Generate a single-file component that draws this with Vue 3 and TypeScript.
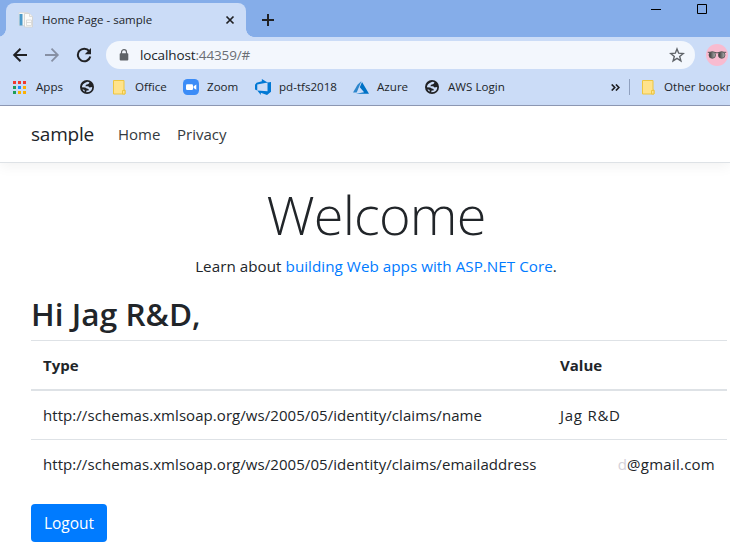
<script setup lang="ts">
interface Claim {
  type: string
  hidden: string
  value: string
}

const claims: Claim[] = [
  { type: 'http://schemas.xmlsoap.org/ws/2005/05/identity/claims/name', hidden: '', value: 'Jag R&D' },
  { type: 'http://schemas.xmlsoap.org/ws/2005/05/identity/claims/emailaddress', hidden: 'd', value: '@gmail.com' },
]

const appDots: string[] = [
  '#f03a2e', '#f03a2e', '#f03a2e',
  '#1f9d58', '#1a8cff', '#fbb004',
  '#1f9d58', '#fbb004', '#fbb004',
]

const globePath =
  'M6.200 2.200Q7.800 1.500 9.400 2.300Q9.400 4 7.800 4.300L6 4.800 5.400 6.300H8.200L9.500 7.500 12.200 7Q12.300 10.800 8.800 12.100L6.200 12.300 6.600 10.500H8.600V9L6.800 8.600 5.200 7.600 1.900 7.300Q2 3.800 6.200 2.200zM2.500 9.200L4.600 9.900V11.700Q3.100 10.900 2.500 9.200z'
</script>

<template>
  <div class="window">
    <header class="chrome">
      <div class="tabstrip">
        <div class="tab">
          <svg class="favicon" width="16" height="16" viewBox="0 0 16 16">
            <path d="M1 .5h9v13H1z" fill="#f6f6f4" stroke="#d5d8dc" stroke-width=".8" />
            <path d="M1.500 2h3v11.500h-3z" fill="#4a9acb" />
            <path d="M6.500 1.500h5l3 3V15h-8z" fill="#fbfbfa" stroke="#d3d3d0" stroke-width=".9" />
            <path d="M8.500 8h5v5.500h-5zM8.500 10.500h5" fill="none" stroke="#d6d6d3" stroke-width=".8" />
            <path d="M11.500 1.500v3h3" fill="#f4f4f4" stroke="#d3d3d0" stroke-width=".8" />
          </svg>
          <span class="tab-title">Home Page - sample</span>
          <svg class="close" width="10" height="10" viewBox="0 0 10 10">
            <path d="M1.500 1.500l7 7M8.500 1.500l-7 7" stroke="#202124" stroke-width="1.7" />
          </svg>
        </div>
        <svg class="plus" width="12" height="12" viewBox="0 0 12 12">
          <path d="M6 0v12M0 6h12" stroke="#202124" stroke-width="2" />
        </svg>
        <svg class="minimize" width="10" height="10" viewBox="0 0 10 10">
          <path d="M0 5.500h10" stroke="#000" />
        </svg>
        <svg class="maximize" width="10" height="10" viewBox="0 0 10 10">
          <path d="M.5.5h9v9h-9z" fill="none" stroke="#000" />
        </svg>
      </div>

      <div class="toolbar">
        <svg class="nav-icon" width="16" height="16" viewBox="0 0 16 16">
          <path d="M15 8H2.500M8.500 1.700L2.200 8l6.300 6.300" fill="none" stroke="#202124" stroke-width="2" />
        </svg>
        <svg class="nav-icon" width="16" height="16" viewBox="0 0 16 16">
          <path d="M1 8h12.500M7.500 1.700L13.800 8l-6.300 6.300" fill="none" stroke="#8790a4" stroke-width="1.800" />
        </svg>
        <svg class="nav-icon" width="16" height="16" viewBox="0 0 16 16">
          <path d="M13.200 4.200A6.300 6.300 0 1 0 14.300 9.500" fill="none" stroke="#202124" stroke-width="2" />
          <path d="M15 1v6.200H8.800z" fill="#202124" />
        </svg>
        <div class="omnibox">
          <svg width="10" height="12" viewBox="0 0 10 12">
            <path d="M2.500 5V3.200a2.500 2.500 0 0 1 5 0V5" fill="none" stroke="#5f6368" stroke-width="1.200" />
            <rect x=".7" y="4.200" width="8.600" height="7.300" rx=".9" fill="#5f6368" />
          </svg>
          <span class="url">localhost<span class="url-rest">:44359/#</span></span>
          <svg class="star" width="16" height="16" viewBox="0 0 16 16">
            <path d="M8 1.900l1.700 4.300 4.500.3-3.500 2.900 1.200 4.500L8 11.400l-3.900 2.500 1.200-4.500-3.500-2.900 4.500-.3z" fill="none" stroke="#5f6368" stroke-width="1.400" />
          </svg>
        </div>
        <svg class="avatar" width="22" height="22" viewBox="0 0 22 22">
          <defs>
            <linearGradient id="lens" x1="0" x2="1">
              <stop offset="0" stop-color="#333" />
              <stop offset="1" stop-color="#b5b5b5" />
            </linearGradient>
          </defs>
          <circle cx="11" cy="11" r="11" fill="#f8bbd0" />
          <path d="M1.800 8.300h6.500q2.700 1.200 5.400 0h6.500" fill="none" stroke="#555" stroke-width="1" />
          <circle cx="6.300" cy="11" r="3.300" fill="url(#lens)" stroke="#555" stroke-width=".8" />
          <circle cx="15.700" cy="11" r="3.300" fill="url(#lens)" stroke="#555" stroke-width=".8" />
        </svg>
      </div>

      <nav class="bookmarks">
        <span class="apps"><i v-for="(c, i) in appDots" :key="i" :style="{ background: c }"></i></span>
        <span class="bm-text apps-text">Apps</span>
        <svg class="globe" width="14" height="14" viewBox="0 0 14 14">
          <circle cx="7" cy="7" r="7" fill="#202124" />
          <path :d="globePath" fill="#cbdcf7" />
        </svg>
        <svg class="folder f1" width="13" height="15" viewBox="0 0 13 15">
          <path d="M.5.500h10.500v9.500h1v4H.5z" fill="#ffe38c" stroke="#edc541" />
          <path d="M9.500 14v-3.500h2.500V14z" fill="#ffe38c" stroke="#edc541" />
        </svg>
        <span class="bm-text office-text">Office</span>
        <svg class="zoom" width="16" height="16" viewBox="0 0 16 16">
          <rect width="16" height="16" rx="4.500" fill="#3b8cf7" />
          <rect x="3" y="5.200" width="7" height="5.800" rx="1.200" fill="#fff" />
          <path d="M10.600 7.300l2.700-1.900v5.400l-2.700-1.900z" fill="#fff" />
        </svg>
        <span class="bm-text zoom-text">Zoom</span>
        <svg class="devops" width="16" height="16" viewBox="1 1 14 14">
          <path d="M15 3.622v8.512L11.500 15l-5.425-1.975v1.958L3.004 10.970l8.951.7V4.005L15 3.622zm-2.984.428L6.994 1v2.001L2.382 4.356 1 6.130v4.029l1.978.873V5.869l9.038-1.818z" fill="#0078d4" />
        </svg>
        <span class="bm-text tfs-text">pd-tfs2018</span>
        <svg class="azure" width="16" height="13" viewBox="0 0 16 13">
          <path d="M8.500 0L4.500 3.700 0 11.500h3.700z" fill="#2d86cc" />
          <path d="M9 1L6.800 6.300l4.300 5L3 12.700h13z" fill="#0072c6" />
        </svg>
        <span class="bm-text azure-text">Azure</span>
        <svg class="globe g2" width="14" height="14" viewBox="0 0 14 14">
          <circle cx="7" cy="7" r="7" fill="#202124" />
          <path :d="globePath" fill="#cbdcf7" />
        </svg>
        <span class="bm-text aws-text">AWS Login</span>
        <svg class="more" width="9" height="7" viewBox="0 0 9 7">
          <path d="M.7.500l3 3-3 3M4.900.500l3 3-3 3" fill="none" stroke="#202124" stroke-width="1.700" />
        </svg>
        <span class="divider"></span>
        <svg class="folder f2" width="13" height="15" viewBox="0 0 13 15">
          <path d="M.5.500h10.500v9.500h1v4H.5z" fill="#ffe38c" stroke="#edc541" />
          <path d="M9.500 14v-3.500h2.500V14z" fill="#ffe38c" stroke="#edc541" />
        </svg>
        <span class="bm-text other-text">Other bookmarks</span>
      </nav>
    </header>

    <nav class="navbar">
      <a class="brand">sample</a>
      <a class="link home">Home</a>
      <a class="link privacy">Privacy</a>
    </nav>

    <main class="content">
      <div class="intro">
        <h1 class="welcome">Welcome</h1>
        <p class="learn">Learn about <a>building Web apps with ASP.NET Core</a>.</p>
      </div>
      <h2 class="greeting">Hi Jag R&amp;D,</h2>
      <table class="claims">
        <thead>
          <tr><th>Type</th><th>Value</th></tr>
        </thead>
        <tbody>
          <tr v-for="claim in claims" :key="claim.type">
            <td>{{ claim.type }}</td>
            <td class="value" :class="{ masked: claim.hidden }"><span class="faint">{{ claim.hidden }}</span>{{ claim.value }}</td>
          </tr>
        </tbody>
      </table>
      <button class="logout" type="button">Logout</button>
    </main>
  </div>
</template>

<style>
body {
  margin: 0;
  overflow: hidden;
}
</style>

<style scoped>
.window {
  width: 730px;
  height: 551px;
  overflow: hidden;
  background: #fff;
  color: #212529;
  font-family: "Open Sans", "Noto Sans", sans-serif;
}
svg { display: block; flex: none; }
.chrome {
  height: 105px;
  background: #cbdcf7;
  border-bottom: 1px solid #8e99b5;
}
.tabstrip {
  display: flex;
  height: 37px;
  background: #85ade9;
}
.tab {
  position: relative;
  display: flex;
  align-items: center;
  box-sizing: border-box;
  width: 240px;
  height: 34px;
  margin: 3px 0 0 6px;
  padding: 0 11px 0 12px;
  border-radius: 8px 8px 0 0;
  background: #cbdcf7;
}
.tab::before,
.tab::after {
  content: "";
  position: absolute;
  bottom: 0;
  width: 8px;
  height: 8px;
}
.tab::before {
  left: -8px;
  background: radial-gradient(circle at 0 0, transparent 7.500px, #cbdcf7 8px);
}
.tab::after {
  right: -8px;
  background: radial-gradient(circle at 100% 0, transparent 7.500px, #cbdcf7 8px);
}
.tab-title {
  margin: -1px 0 0 8px;
  font-size: 11.500px;
  white-space: nowrap;
}
.close { margin-left: auto; }
.plus { margin: 14px 0 0 16px; }
.minimize { margin: 4px 0 0 auto; }
.maximize { margin: 4px 23px 0 36px; }
.toolbar {
  display: flex;
  align-items: center;
  height: 36px;
  padding-left: 12px;
}
.nav-icon { margin-right: 16px; }
.omnibox {
  display: flex;
  align-items: center;
  box-sizing: border-box;
  width: 589px;
  height: 28px;
  margin-left: -2px;
  padding: 0 10px 0 13px;
  border-radius: 14px;
  background: #f3f7fd;
}
.url {
  margin-left: 11px;
  font-size: 13.500px;
  letter-spacing: -.13px;
  white-space: nowrap;
}
.url-rest { color: #6b6e74; }
.star { margin-left: auto; }
.avatar { margin-left: 11px; }
.bookmarks {
  display: flex;
  align-items: center;
  height: 28px;
  padding-left: 13px;
}
.bm-text {
  margin-top: -2px;
  font-size: 11.600px;
  white-space: nowrap;
  flex: none;
}
.apps {
  display: grid;
  grid-template-columns: repeat(3, 3px);
  gap: 2px;
  width: 13px;
}
.apps i { height: 3px; }
.apps-text { width: 34px; margin-left: 10px; margin-right: 10px; }
.f1 { margin-left: 19px; }
.office-text { width: 38px; margin-left: 9px; }
.zoom { margin-left: 10px; }
.zoom-text { width: 38px; margin-left: 8px; }
.devops { margin-left: 10px; }
.tfs-text { width: 64px; margin-left: 8px; }
.azure { margin-left: 10px; }
.azure-text { width: 40px; margin-left: 8px; }
.g2 { margin-left: 8px; }
.aws-text { width: 66px; margin-left: 9px; }
.more { margin-left: auto; }
.divider {
  width: 1px;
  height: 16px;
  margin-left: 9px;
  background: #8fa0bf;
}
.f2 { margin-left: 12px; }
.other-text { width: 66px; margin-left: 9px; overflow: hidden; }
.navbar {
  display: flex;
  align-items: center;
  height: 56px;
  padding-left: 31px;
  border-bottom: 1px solid #dee2e6;
  box-shadow: 0 4px 12px rgba(0, 0, 0, .05);
}
.brand {
  width: 87px;
  font-size: 19px;
  letter-spacing: -.2px;
  line-height: 30px;
}
.link { font-size: 15px; color: #343a40; }
.home { width: 59px; }
.content { padding: 16px 3px 0 31px; }
.intro {
  padding-right: 6px;
  text-align: center;
}
.welcome {
  margin: 0;
  padding-top: 2px;
  font-size: 54px;
  font-weight: 300;
  letter-spacing: -.8px;
  line-height: 67px;
}
.learn {
  margin: 6px 0 17px;
  font-size: 15.200px;
  letter-spacing: .04px;
  line-height: 24px;
}
.learn a { color: #007bff; }
.greeting {
  margin: 0 0 7px;
  font-size: 31.500px;
  font-weight: 600;
  letter-spacing: .06px;
  line-height: 38px;
}
.claims {
  width: 696px;
  border-collapse: collapse;
  table-layout: fixed;
  font-size: 15px;
  line-height: 24px;
}
.claims th,
.claims td {
  padding: 12px;
  border-top: 1px solid #dee2e6;
  text-align: left;
  white-space: nowrap;
}
.claims th:first-child { width: 493px; }
.claims thead th { border-bottom: 2px solid #dee2e6; }
.claims td { letter-spacing: .06px; }
.claims td.value { letter-spacing: .75px; }
.claims td.masked { letter-spacing: .25px; text-align: right; }
.faint { color: #d5d2da; }
.logout {
  display: block;
  width: 76px;
  height: 38px;
  margin-top: 16px;
  padding: 0;
  border: 0;
  border-radius: 4px;
  background: #007bff;
  color: #fff;
  font: 15.500px/24px "Open Sans", "Noto Sans", sans-serif;
}
</style>
